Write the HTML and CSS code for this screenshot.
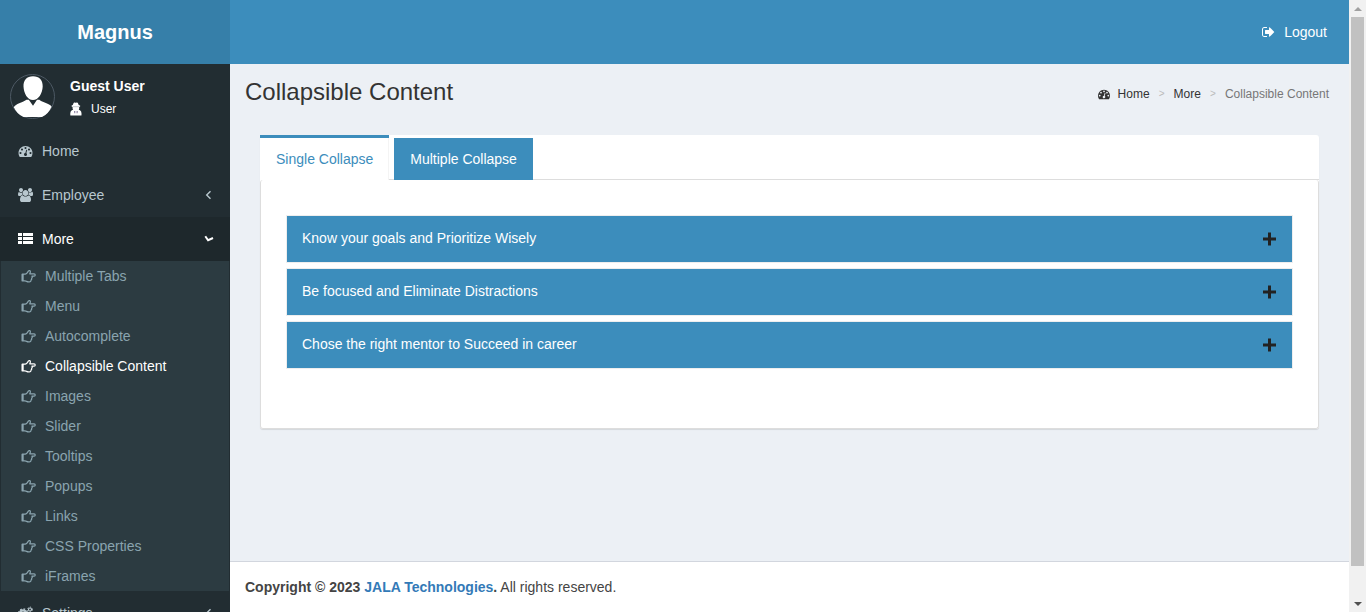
FILE: index.html
```html
<!DOCTYPE html>
<html lang="en">
<head>
<meta charset="utf-8">
<title>Magnus | Collapsible Content</title>
<link rel="stylesheet" href="styles.css">
</head>
<body>
<svg class="sprite" aria-hidden="true">
  <symbol id="i-dash" viewBox="0 0 1792 1792"><path d="M384 1152q0-53-37.500-90.500t-90.500-37.500-90.500 37.500-37.500 90.500 37.500 90.500 90.500 37.500 90.500-37.500 37.500-90.500zm192-448q0-53-37.500-90.500t-90.500-37.500-90.500 37.500-37.500 90.500 37.500 90.500 90.500 37.500 90.500-37.500 37.500-90.500zm428 481l101-382q6-26-7.500-48.500t-38.500-29.500-48 6.500-30 39.500l-101 382q-60 5-107 43.500t-63 98.500q-20 77 20 146t117 89 146-20 89-117q16-60-6-117t-72-91zm660-33q0-53-37.500-90.500t-90.500-37.500-90.500 37.500-37.500 90.500 37.500 90.500 90.500 37.500 90.500-37.500 37.500-90.500zm-640-640q0-53-37.500-90.500t-90.500-37.500-90.500 37.500-37.500 90.500 37.500 90.500 90.500 37.500 90.500-37.500 37.500-90.500zm448 192q0-53-37.500-90.500t-90.500-37.500-90.500 37.500-37.500 90.500 37.500 90.500 90.500 37.500 90.500-37.500 37.500-90.500zm320 448q0 261-141 483-19 29-54 29h-1402q-35 0-54-29-141-221-141-483 0-182 71-348t191-286 286-191 348-71 348 71 286 191 191 286 71 348z"/></symbol>
  <symbol id="i-out" viewBox="-64 0 1792 1792"><path d="M704 1440q0 4 1 20t.5 26.500-3 23.500-10 19.500-20.500 6.500h-320q-119 0-203.500-84.500t-84.500-203.500v-704q0-119 84.500-203.500t203.500-84.500h320q13 0 22.500 9.500t9.500 22.500q0 4 1 20t.5 26.500-3 23.500-10 19.500-20.500 6.500h-320q-66 0-113 47t-47 113v704q0 66 47 113t113 47h312l11.500 1 11.500 3 8 5.500 7 9 2 13.500zm928-544q0 26-19 45l-544 544q-19 19-45 19t-45-19-19-45v-288h-448q-26 0-45-19t-19-45v-384q0-26 19-45t45-19h448v-288q0-26 19-45t45-19 45 19l544 544q19 19 19 45z"/></symbol>
  <symbol id="i-users" viewBox="64 0 1920 1792"><path d="M657 896q-162 5-265 128h-134q-82 0-138-40.500t-56-118.500q0-353 124-353 6 0 43.500 21t97.500 42.500 119 21.500q67 0 133-23-5 37-5 66 0 159 90 287zm1071 637q0 120-73 189.500t-194 69.500h-874q-121 0-194-69.500t-73-189.500q0-53 3.500-103.500t14-109 26.500-108.500 43-97.500 62-81 85.500-53.500 111.500-20q10 0 43 21.500t73 48 107 48 135 21.500 135-21.500 107-48 73-48 43-21.500q61 0 111.500 20t85.500 53.500 62 81 43 97.500 26.500 108.500 14 109 3.500 103.500zm-1024-1277q0 106-75 181t-181 75-181-75-75-181 75-181 181-75 181 75 75 181zm704 384q0 159-112.500 271.500t-271.500 112.500-271.500-112.500-112.500-271.500 112.500-271.500 271.500-112.500 271.500 112.500 112.500 271.500zm576 225q0 78-56 118.500t-138 40.500h-134q-103-123-265-128 90-128 90-287 0-29-5-66 66 23 133 23 59 0 119-21.500t97.500-42.500 43.500-21q124 0 124 353zm-128-609q0 106-75 181t-181 75-181-75-75-181 75-181 181-75 181 75 75 181z"/></symbol>
  <symbol id="i-list" viewBox="0 0 15 14"><path d="M0 1h4v3H0zM5 1h10v3H5zM0 5h4v3H0zM5 5h10v3H5zM0 9h4v3H0zM5 9h10v3H5z"/></symbol>
  <symbol id="i-hand" viewBox="0 0 15 14"><path d="M1.200 5.200H4.300C5.900 4.800 6.600 3.200 7.300 2.200 8 1.100 9.600 1.600 9.400 2.900c-.1.900-.5 1.300-.6 2h4.300c1.500 0 1.500 2.200 0 2.200h-2.200c.7.900.4 1.800-.3 2.200.4.900 0 1.500-.6 1.800.1 1.100-.5 1.700-1.700 1.700H7.200c-1.200 0-2-.9-3.200-.9H1.200z" fill="none" stroke="currentColor" stroke-width="1.200" stroke-linejoin="round"/><path d="M.8 5h1.900v7H.8z"/></symbol>
  <symbol id="i-gears" viewBox="0 0 15 14"><g fill="none" stroke="currentColor"><circle cx="5" cy="7.300" r="2.900" stroke-width="2.300"/><circle cx="5" cy="7.300" r="4.400" stroke-width="1.400" stroke-dasharray="1.700 1.755"/><circle cx="12" cy="3.500" r="1.500" stroke-width="1.200"/><circle cx="12" cy="3.500" r="2.400" stroke-width="1" stroke-dasharray="1.200 1.313"/><circle cx="12" cy="11" r="1.500" stroke-width="1.200"/><circle cx="12" cy="11" r="2.400" stroke-width="1" stroke-dasharray="1.200 1.313"/></g></symbol>
  <symbol id="i-secret" viewBox="0 0 12 14"><path d="M2.800 3 3.600.9Q4 .2 4.900.6q.8.400 1.600 0Q7.500.2 7.900.9l.8 2.100 1.300.6q.6.400 0 .8l-.8.500v1.500q-.1.800-.5 1.300L10 8.200q1.500.8 1.500 3V13q0 .5-.5.500H.8q-.5 0-.5-.5v-1.800q0-2.200 1.500-3l1.400-.5q-.5-.5-.6-1.300V4.900l-.9-.5q-.5-.4 0-.8z"/><path d="M4.300 9h.9v2.200h-.7zM6.700 9h.9l-.2 2.200h-.7z" fill="#5b4a78"/><path d="M2.700 4.600h6.400v.5H2.700z" fill="#8d989d"/></symbol>
  <symbol id="i-left" viewBox="0 0 10 14"><path d="M6.500 3.200 2.700 7l3.800 3.800" fill="none" stroke="currentColor" stroke-width="1.400"/></symbol>
  <symbol id="i-down" viewBox="0 0 10 14"><path d="M1.300 4.200 4.100 8.200 9 6" fill="none" stroke="currentColor" stroke-width="2"/></symbol>
  <symbol id="i-plus" viewBox="0 0 14 14"><path d="M5 .5h3v5h5v3H8v5H5v-5H0v-3h5z"/></symbol>
</svg>

<div class="app">
  <header class="header">
    <a class="brand" href="#">Magnus</a>
    <nav class="topbar"><a class="logout" href="#"><svg class="icon"><use href="#i-out"/></svg>Logout</a></nav>
  </header>
  <div class="body">
    <aside class="sidebar">
      <div class="user">
        <svg class="avatar" viewBox="0 0 45 45" role="img" aria-label="Guest User"><circle cx="22.500" cy="22.500" r="22" fill="#222d32" stroke="#4d5964"/><path d="M23 2.300c6.400 0 9.900 4 9.700 10.200-.3 7-4.200 13.500-9.700 13.500s-9.200-6.500-9.500-13.500c-.2-6.200 3.300-10.200 9.500-10.200zM16.500 25.700h2.300l4.200 6 4-6h2.300c4.500 3.600 10.500 3.300 12.300 7.100q-3.300 7.500-9.600 10.200H13.500Q7 40.300 3.800 33.300c2-4 8.300-4.400 12.700-7.600z" fill="#fff"/></svg>
        <div class="who"><strong class="name">Guest User</strong><a class="role" href="#"><svg class="icon-role"><use href="#i-secret"/></svg>User</a></div>
      </div>
      <nav class="menu">
        <a class="item" href="#"><svg class="icon"><use href="#i-dash"/></svg>Home</a>
        <a class="item" href="#"><svg class="icon"><use href="#i-users"/></svg>Employee<svg class="caret"><use href="#i-left"/></svg></a>
        <a class="item open" href="#"><svg class="icon"><use href="#i-list"/></svg>More<svg class="caret"><use href="#i-down"/></svg></a>
        <div class="submenu">
          <a class="sub" href="#"><svg class="icon"><use href="#i-hand"/></svg>Multiple Tabs</a>
          <a class="sub" href="#"><svg class="icon"><use href="#i-hand"/></svg>Menu</a>
          <a class="sub" href="#"><svg class="icon"><use href="#i-hand"/></svg>Autocomplete</a>
          <a class="sub current" href="#" aria-current="page"><svg class="icon"><use href="#i-hand"/></svg>Collapsible Content</a>
          <a class="sub" href="#"><svg class="icon"><use href="#i-hand"/></svg>Images</a>
          <a class="sub" href="#"><svg class="icon"><use href="#i-hand"/></svg>Slider</a>
          <a class="sub" href="#"><svg class="icon"><use href="#i-hand"/></svg>Tooltips</a>
          <a class="sub" href="#"><svg class="icon"><use href="#i-hand"/></svg>Popups</a>
          <a class="sub" href="#"><svg class="icon"><use href="#i-hand"/></svg>Links</a>
          <a class="sub" href="#"><svg class="icon"><use href="#i-hand"/></svg>CSS Properties</a>
          <a class="sub" href="#"><svg class="icon"><use href="#i-hand"/></svg>iFrames</a>
        </div>
        <a class="item" href="#"><svg class="icon"><use href="#i-gears"/></svg>Settings<svg class="caret"><use href="#i-left"/></svg></a>
      </nav>
    </aside>
    <div class="page">
      <main class="main">
        <div class="heading">
          <h1 class="title">Collapsible Content</h1>
          <nav class="crumbs" aria-label="Breadcrumb"><a class="crumb" href="#"><svg class="icon-crumb"><use href="#i-dash"/></svg>Home</a><span class="sep">&gt;</span><a class="crumb" href="#">More</a><span class="sep">&gt;</span><span class="here">Collapsible Content</span></nav>
        </div>
        <section class="tabs">
          <div class="tablist" role="tablist">
            <button class="tab active" role="tab" aria-selected="true">Single Collapse</button>
            <button class="tab" role="tab" aria-selected="false">Multiple Collapse</button>
          </div>
          <div class="panel" role="tabpanel">
            <button class="fold" aria-expanded="false">Know your goals and Prioritize Wisely<svg class="plus"><use href="#i-plus"/></svg></button>
            <button class="fold" aria-expanded="false">Be focused and Eliminate Distractions<svg class="plus"><use href="#i-plus"/></svg></button>
            <button class="fold" aria-expanded="false">Chose the right mentor to Succeed in career<svg class="plus"><use href="#i-plus"/></svg></button>
          </div>
        </section>
      </main>
      <footer class="footer"><strong>Copyright © 2023 <a class="company" href="#">JALA Technologies</a>.</strong> All rights reserved.</footer>
    </div>
  </div>
</div>
<div class="scrollbar" aria-hidden="true">
  <span class="arrow up"></span>
  <span class="track"><span class="thumb"></span></span>
  <span class="arrow down"></span>
</div>
</body>
</html>
```
FILE: styles.css
```css
* { box-sizing: border-box; }
body {
  margin: 0;
  height: 100vh;
  display: flex;
  overflow: hidden;
  font: 14px/20px "Liberation Sans", Arial, sans-serif;
  color: #333;
  background: #ecf0f5;
}
a { color: inherit; text-decoration: none; }
button { font: inherit; border: 0; cursor: pointer; }
svg { fill: currentColor; flex: none; }
.sprite { position: absolute; width: 0; height: 0; }
.icon { width: 14px; height: 14px; }

.app { flex: 1; min-width: 0; display: flex; flex-direction: column; }
.header { display: flex; flex: none; height: 64px; color: #fff; background: #3c8dbc; }
.brand {
  width: 230px;
  background: #367fa9;
  font-size: 20px;
  font-weight: bold;
  line-height: 64px;
  text-align: center;
}
.topbar { flex: 1; display: flex; justify-content: flex-end; align-items: center; padding-right: 22px; }
.logout { display: flex; align-items: center; gap: 9px; }
.body { flex: 1; min-height: 0; display: flex; }

.sidebar { flex: none; width: 230px; overflow: hidden; background: #222d32; color: #b8c7ce; }
.user { display: flex; gap: 15px; padding: 10px; color: #fff; }
.avatar { width: 45px; height: 45px; }
.who { display: flex; flex-direction: column; gap: 3px; padding-top: 2px; }
.role { display: flex; align-items: center; gap: 9px; font-size: 12px; }
.icon-role { width: 12px; height: 14px; }
.item { display: flex; align-items: center; gap: 9px; height: 44px; padding: 0 16px 0 18px; }
.item .icon { width: 15px; }
.item.open { color: #fff; background: #1e282c; }
.caret { width: 10px; height: 14px; margin-left: auto; }
.submenu { margin: 0 1px; background: #2c3b41; color: #8aa4af; }
.sub { display: flex; align-items: center; gap: 9px; height: 30px; padding-left: 20px; }
.sub .icon { width: 15px; }
.sub.current { color: #fff; }

.page { flex: 1; min-width: 0; display: flex; flex-direction: column; }
.main { flex: 1; padding: 15px; }
.heading { display: flex; justify-content: space-between; align-items: center; padding-right: 5px; }
.title { margin: 0; font-size: 24px; font-weight: normal; line-height: 26px; }
.crumbs { display: flex; font-size: 12px; padding-top: 4px; }
.crumb { display: flex; align-items: center; color: #333; }
.icon-crumb { width: 12px; height: 12px; margin-right: 8px; }
.sep { width: 24px; text-align: center; color: #bbb; font-size: 10px; }
.here { color: #777; }

.tabs { margin: 30px 15px 0; background: #fff; border-radius: 3px; box-shadow: 0 1px 1px rgba(0, 0, 0, .1); }
.tablist { display: flex; gap: 5px; height: 45px; box-shadow: inset 0 -1px #ddd; }
.tab { padding: 0 16px; color: #fff; background: #3c8dbc; border-top: 3px solid #fff; }
.tab.active { color: #3c8dbc; background: #fff; border-top-color: #3c8dbc; box-shadow: inset -1px 0 #f4f4f4; }
.panel {
  display: flex;
  flex-direction: column;
  gap: 5px;
  padding: 35px 25px 59px;
  border: 1px solid #ddd;
  border-top: 0;
  border-radius: 3px;
}
.fold {
  display: flex;
  justify-content: space-between;
  align-items: center;
  height: 48px;
  padding: 0 15px 2px 15px;
  color: #fff;
  background: #3c8dbc;
  border: 1px solid #eee;
}
.plus { width: 14px; height: 14px; margin-top: 2px; color: #222; }

.footer { flex: none; padding: 15px; background: #fff; border-top: 1px solid #d2d6de; color: #444; }
.company { color: #337ab7; }

.scrollbar { flex: none; width: 17px; display: flex; flex-direction: column; align-items: center; background: #f1f1f1; }
.arrow { flex: none; width: 17px; height: 17px; display: grid; place-items: center; }
.arrow::before { content: ""; border: 4px solid transparent; }
.up::before { border-top: 0; border-bottom-color: #a0a0a0; }
.down::before { border-bottom: 0; border-top-color: #505050; }
.track { flex: 1; width: 13px; }
.thumb { display: block; height: 95%; background: #c1c1c1; }
```
